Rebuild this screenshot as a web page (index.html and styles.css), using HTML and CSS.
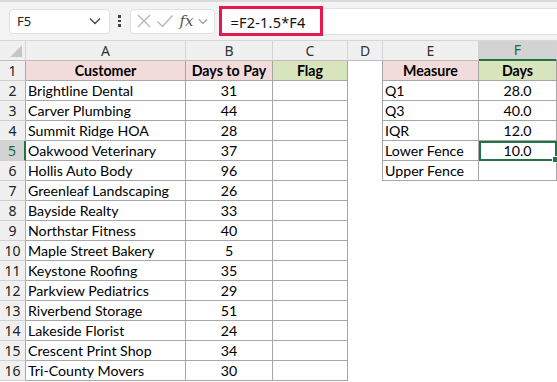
FILE: index.html
```html
<!DOCTYPE html>
<html lang="en">
<head>
  <meta charset="UTF-8">
  <title>Quartile Fences</title>
  <link rel="stylesheet" href="styles.css">
</head>
<body>

  <!-- Formula bar -->
  <div class="toolbar">
    <div class="name-box">
      <span>F5</span>
      <svg width="12" height="8" viewBox="0 0 12 8"><path d="M1 1.5 L6 6.5 L11 1.5" fill="none" stroke="#444" stroke-width="1.3"/></svg>
    </div>
    <div class="dots"><i></i><i></i><i></i></div>
    <div class="fx-box">
      <svg width="16" height="16" viewBox="0 0 16 16"><path d="M2 2 L14 14 M14 2 L2 14" stroke="#b4b4b4" stroke-width="1.3"/></svg>
      <svg width="18" height="16" viewBox="0 0 18 16"><path d="M1.5 8.5 L6.5 13.5 L16.5 2.5" fill="none" stroke="#b4b4b4" stroke-width="1.3"/></svg>
      <span class="fx">fx</span>
      <svg width="10" height="7" viewBox="0 0 10 7"><path d="M1 1.5 L5 5.5 L9 1.5" fill="none" stroke="#999" stroke-width="1.2"/></svg>
    </div>
    <div class="formula">
      <span class="formula-text">=F2-1.5*F4</span>
    </div>
  </div>

  <!-- Sheet -->
  <table class="sheet">
    <colgroup>
      <col style="width:26px"><col style="width:160px"><col style="width:87px"><col style="width:75px">
      <col style="width:35px"><col style="width:96px"><col style="width:78px">
    </colgroup>
    <thead>
      <tr>
        <th class="corner"><span class="tri"></span></th>
        <th class="ch">A</th>
        <th class="ch">B</th>
        <th class="ch">C</th>
        <th class="ch">D</th>
        <th class="ch">E</th>
        <th class="ch sel-col">F</th>
      </tr>
    </thead>
    <tbody>
      <tr>
        <th class="rh">1</th>
        <td class="b pink hd">Customer</td>
        <td class="b pink hd">Days to Pay</td>
        <td class="b green hd">Flag</td>
        <td class="edge"></td>
        <td class="b pink hd">Measure</td>
        <td class="b green hd">Days</td>
      </tr>
      <tr>
        <th class="rh">2</th>
        <td class="b">Brightline Dental</td><td class="b num">31</td><td class="b"></td>
        <td class="edge"></td><td class="b">Q1</td><td class="b num">28.0</td>
      </tr>
      <tr>
        <th class="rh">3</th>
        <td class="b">Carver Plumbing</td><td class="b num">44</td><td class="b"></td>
        <td class="edge"></td><td class="b">Q3</td><td class="b num">40.0</td>
      </tr>
      <tr>
        <th class="rh">4</th>
        <td class="b">Summit Ridge HOA</td><td class="b num">28</td><td class="b"></td>
        <td class="edge"></td><td class="b">IQR</td><td class="b num">12.0</td>
      </tr>
      <tr>
        <th class="rh sel-row">5</th>
        <td class="b">Oakwood Veterinary</td><td class="b num">37</td><td class="b"></td>
        <td class="edge"></td><td class="b">Lower Fence</td><td class="b num active">10.0</td>
      </tr>
      <tr>
        <th class="rh">6</th>
        <td class="b">Hollis Auto Body</td><td class="b num">96</td><td class="b"></td>
        <td class="edge"></td><td class="b">Upper Fence</td><td class="b num"></td>
      </tr>
      <tr><th class="rh">7</th><td class="b">Greenleaf Landscaping</td><td class="b num">26</td><td class="b"></td><td></td><td></td><td></td></tr>
      <tr><th class="rh">8</th><td class="b">Bayside Realty</td><td class="b num">33</td><td class="b"></td><td></td><td></td><td></td></tr>
      <tr><th class="rh">9</th><td class="b">Northstar Fitness</td><td class="b num">40</td><td class="b"></td><td></td><td></td><td></td></tr>
      <tr><th class="rh">10</th><td class="b">Maple Street Bakery</td><td class="b num">5</td><td class="b"></td><td></td><td></td><td></td></tr>
      <tr><th class="rh">11</th><td class="b">Keystone Roofing</td><td class="b num">35</td><td class="b"></td><td></td><td></td><td></td></tr>
      <tr><th class="rh">12</th><td class="b">Parkview Pediatrics</td><td class="b num">29</td><td class="b"></td><td></td><td></td><td></td></tr>
      <tr><th class="rh">13</th><td class="b">Riverbend Storage</td><td class="b num">51</td><td class="b"></td><td></td><td></td><td></td></tr>
      <tr><th class="rh">14</th><td class="b">Lakeside Florist</td><td class="b num">24</td><td class="b"></td><td></td><td></td><td></td></tr>
      <tr><th class="rh">15</th><td class="b">Crescent Print Shop</td><td class="b num">34</td><td class="b"></td><td></td><td></td><td></td></tr>
      <tr><th class="rh">16</th><td class="b">Tri-County Movers</td><td class="b num">30</td><td class="b"></td><td></td><td></td><td></td></tr>
    </tbody>
  </table>

</body>
</html>
```

FILE: styles.css
```css
body {
  margin: 0;
  background: #ffffff;
  font-family: Lato, "Noto Sans", sans-serif;
  width: 557px;
  overflow: hidden;
}

/* Formula bar */
.toolbar {
  display: flex;
  align-items: center;
  height: 38px;
  background: #f3f3f3;
  border-top: 2px solid #dadada;
  border-bottom: 1px solid #d6d6d6;
  font-family: "Noto Sans", "Open Sans", sans-serif;
}

.name-box {
  display: flex;
  align-items: center;
  justify-content: space-between;
  box-sizing: border-box;
  width: 101px;
  height: 25px;
  margin-left: 9px;
  padding: 0 8px 0 7px;
  background: #fff;
  border: 1px solid #e1e1e1;
  border-radius: 4px;
  font-size: 13px;
  color: #222;
}

.dots {
  display: flex;
  flex-direction: column;
  gap: 2px;
  margin: 0 9px 0 8px;
}

.dots i {
  width: 2.5px;
  height: 2.5px;
  background: #444;
}

.fx-box {
  display: flex;
  align-items: center;
  gap: 4px;
  box-sizing: border-box;
  width: 85px;
  height: 25px;
  padding: 0 4px 0 5px;
  background: #fff;
  border: 1px solid #e1e1e1;
  border-radius: 4px;
}

.fx {
  font-family: "DejaVu Serif", "Liberation Serif", serif;
  font-style: italic;
  font-size: 15px;
  color: #555;
  margin-left: 2px;
}

.formula {
  display: flex;
  align-items: center;
  flex: 1;
  height: 25px;
  margin-left: 5px;
  background: #fff;
  border: 1px solid #e1e1e1;
  border-right: none;
}

.formula-text {
  box-sizing: border-box;
  height: 30px;
  margin-left: -2px;
  padding: 3px 0 0 9px;
  width: 104px;
  border: 3px solid #e8174c;
  font-size: 14.5px;
  color: #111;
  letter-spacing: 0.2px;
}

/* Sheet grid */
.sheet {
  table-layout: fixed;
  width: 557px;
  border-collapse: separate;
  border-spacing: 0;
  font-size: 14.2px;
  color: #000;
}

.sheet tr {
  height: 20px;
}

.sheet th,
.sheet td {
  box-sizing: border-box;
  height: 20px;
  padding: 0 2px;
  white-space: nowrap;
  overflow: hidden;
  line-height: 18px;
}

.ch {
  background: #f0f0f0;
  font-weight: normal;
  color: #333;
  border-right: 1px solid #d4d4d4;
  border-bottom: 1px solid #bdbdbd;
  font-family: "Noto Sans", sans-serif;
  font-size: 14px;
}

.corner {
  background: #f0f0f0;
  border-right: 1px solid #d4d4d4;
  border-bottom: 1px solid #bdbdbd;
  position: relative;
}

.tri {
  position: absolute;
  right: 3px;
  bottom: 3px;
  width: 0;
  height: 0;
  border-left: 12px solid transparent;
  border-bottom: 12px solid #c6c6c6;
}

.sel-col {
  background: #d3d3d3;
  color: #1a6b43;
  border-bottom: 2px solid #217346;
}

.rh {
  background: #f0f0f0;
  font-weight: normal;
  color: #222;
  text-align: center;
  border-right: 1px solid #a8a8a8;
  border-bottom: 1px solid #d0d0d0;
  font-family: "Noto Sans", sans-serif;
  font-size: 14px;
}

.sheet .rh {
  padding: 0;
}

.sel-row {
  background: #d3d3d3;
  color: #1a6b43;
  border-right: 2px solid #217346;
}

.b {
  border-right: 1px solid #a6a6a6;
  border-bottom: 1px solid #a6a6a6;
}

.edge {
  border-right: 1px solid #a6a6a6;
}

.hd {
  font-weight: bold;
  text-align: center;
}

.pink {
  background: #f2dcdb;
}

.green {
  background: #d8e4bc;
}

.num {
  text-align: center;
}

.sheet .active {
  position: relative;
  overflow: visible;
  outline: 2px solid #217346;
  outline-offset: -2px;
}

.active::after {
  content: "";
  position: absolute;
  right: -3px;
  bottom: -3px;
  width: 5px;
  height: 5px;
  background: #217346;
  border: 1px solid #fff;
}
```
